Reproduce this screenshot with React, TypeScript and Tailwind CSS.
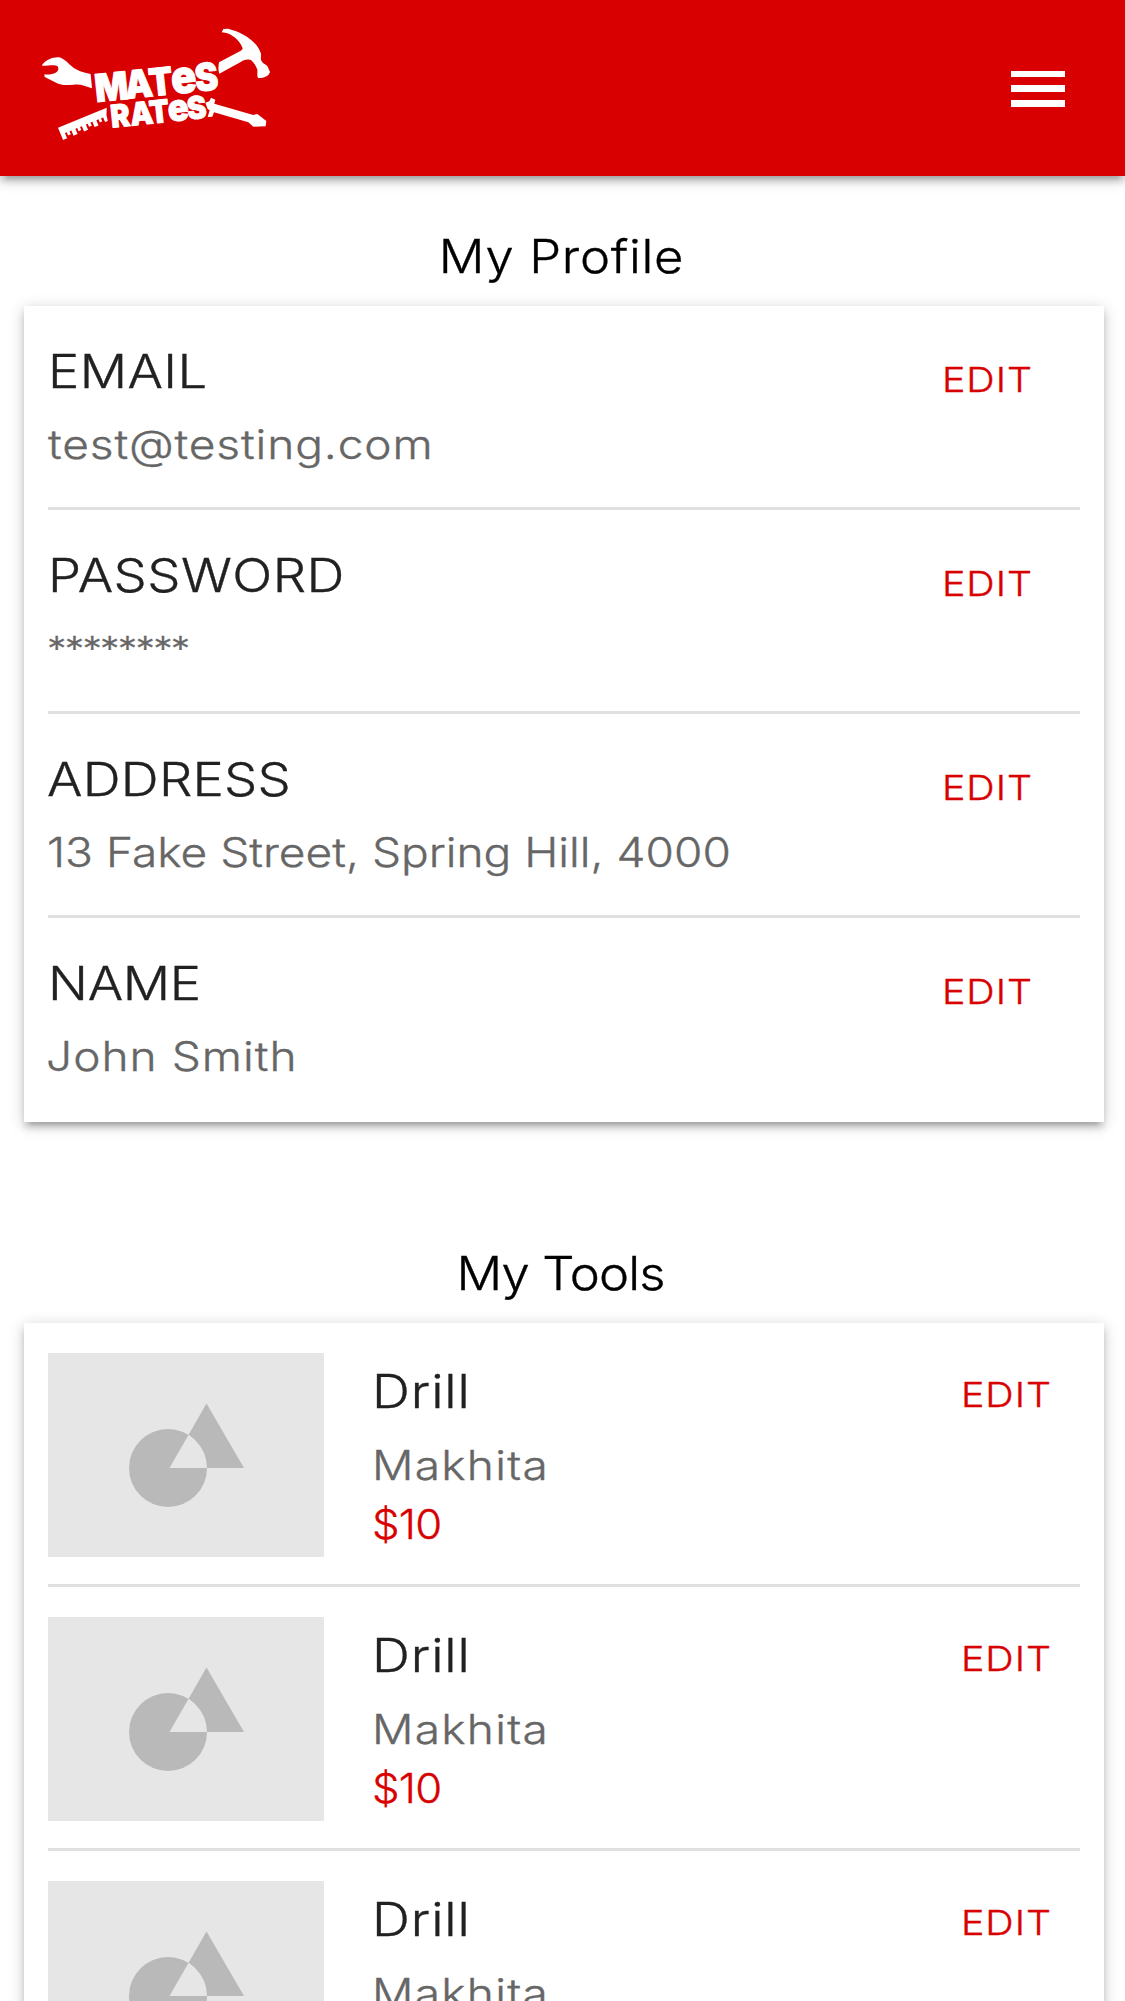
import React from 'react';

const profile = [
  { label: 'EMAIL', value: 'test@testing.com', labelClass: 'tracking-[0.3px]', valueClass: 'tracking-[0.76px] text-[40.4px]' },
  { label: 'PASSWORD', value: '********', labelClass: 'tracking-[0.4px]', valueClass: 'tracking-[-1.5px] text-[34px] -ml-px' },
  { label: 'ADDRESS', value: '13 Fake Street, Spring Hill, 4000', labelClass: 'tracking-[0.2px] -ml-px', valueClass: 'tracking-[0px] text-[40.4px] -ml-px' },
  { label: 'NAME', value: 'John Smith', labelClass: 'tracking-[-0.3px]', valueClass: 'tracking-[0.9px] text-[40.4px] -ml-0.5' },
];

const tools = [
  { id: 1, name: 'Drill', brand: 'Makhita', price: '$10' },
  { id: 2, name: 'Drill', brand: 'Makhita', price: '$10' },
  { id: 3, name: 'Drill', brand: 'Makhita', price: '$10' },
];

function Logo() {
  return (
    <svg viewBox="0 0 780 420" className="h-[140px] w-[260px]" fill="#fff" role="img" aria-label="Mates Rates">
      <path d="M36 150C50 132 75 124 92 128C108 134 120 152 138 163C152 171 168 175 182 177L186 220C165 212 150 206 130 209C110 210 95 212 80 204L44 186L43 178C58 180 68 177 76 174C85 169 88 160 82 153C72 148 50 153 37 152Z" />
      <path d="M580 42L594 41C640 52 682 80 693 116C694 124 691 130 694 137C700 147 708 147 712 153L720 171C716 184 700 190 684 189C680 180 683 172 682 164C678 152 668 136 660 134C650 132 640 134 632 141L568 176C564 165 565 155 567 142L631 108C640 104 638 98 636 95C628 75 605 58 590 54L575 52Z" />
      <path
        transform="matrix(.925 -.38 .38 .925 84 338)"
        d="M0 0H158L149 20L146 38H137V23H130V33H122V23H115V40H102V23H96V33H87V23H81V40H68V23H62V33H53V23H47V40H34V23H28V33H19V23H13V40H0Z"
      />
      <path d="M526 263L538 259L543 248L556 254L553 266L670 300L682 297L709 318L707 334L670 335L655 322L552 292L547 305L533 306L539 286L533 282Z" />
      <g fontFamily="Inter, sans-serif" fontWeight="900" stroke="#fff" strokeWidth="3" strokeLinejoin="round">
        <g transform="translate(204 261) rotate(-6) scale(.91 1)">
          <text fontSize="115">
            <tspan x="-6">M</tspan><tspan x="94">A</tspan><tspan x="173">T</tspan><tspan x="247" fontSize="138">e</tspan><tspan x="326">S</tspan>
          </text>
        </g>
        <g transform="translate(249 338) rotate(-6) scale(.92 1)">
          <text fontSize="94">
            <tspan x="-4">R</tspan><tspan x="60">A</tspan><tspan x="123">T</tspan><tspan x="184" fontSize="112">e</tspan><tspan x="247">S</tspan>
          </text>
        </g>
      </g>
    </svg>
  );
}

function Placeholder() {
  return (
    <svg viewBox="0 0 276 204" className="mt-[30px] h-[204px] w-[276px] shrink-0 bg-[#e6e6e6]" fill="#b9b9b9">
      <path fillRule="evenodd" d="M81 115a39 39 0 1 0 78 0a39 39 0 1 0 -78 0ZM158.500 50.500L196 115H121.500Z" />
    </svg>
  );
}

function Edit({ className }: { className: string }) {
  return (
    <div className={className}>
      <button className="block origin-left scale-x-[1.14] text-[34.6px] leading-[48px] tracking-[0.8px] text-[#d80000]">EDIT</button>
    </div>
  );
}

const cardShadow = 'shadow-[0_6px_6px_0_rgba(0,0,0,0.14),0_9px_3px_-6px_rgba(0,0,0,0.12),0_3px_15px_0_rgba(0,0,0,0.2)]';

export default function App() {
  return (
    <div className="h-[2001px] overflow-hidden bg-white font-['Inter',sans-serif] font-light whitespace-nowrap [-webkit-text-stroke:0.35px]">
      <header className={`flex h-44 items-start justify-between bg-[#d80000] pt-[15px] pr-[60px] pl-[30px] ${cardShadow}`}>
        <Logo />
        <button aria-label="Menu" className="mt-[55.500px] flex w-[54px] flex-col gap-[8.600px]">
          <span className="h-[6.400px] bg-white" />
          <span className="h-[6.400px] bg-white" />
          <span className="h-[6.400px] bg-white" />
        </button>
      </header>

      <h1 className="mt-14 flex justify-center pr-[3px] text-[46.200px] leading-[48px]">
        <span className="scale-x-[1.1] tracking-[0.6px]">My Profile</span>
      </h1>
      <section className={`mt-[26px] mr-[21px] ml-6 bg-white px-6 ${cardShadow}`}>
        {profile.map((row) => (
          <div key={row.label} className="flex h-[204px] border-b-[3px] border-[#e0e0e0] last:border-b-0">
            <div className="flex grow flex-col items-start pt-[41px]">
              <h2 className={`origin-left scale-x-[1.14] text-[46.200px] leading-[48px] text-[#212121] ${row.labelClass}`}>{row.label}</h2>
              <p className={`mt-[26px] origin-left scale-x-[1.14] leading-[48px] text-[#666] ${row.valueClass}`}>{row.value}</p>
            </div>
            <Edit className="w-[138px] shrink-0 pt-[49px]" />
          </div>
        ))}
      </section>

      <h1 className="mt-[127px] flex justify-center pr-[3px] text-[46.200px] leading-[48px]">
        <span className="scale-x-[1.1] tracking-[-0.8px]">My Tools</span>
      </h1>
      <section className={`mt-[26px] mr-[21px] ml-6 bg-white px-6 ${cardShadow}`}>
        {tools.map((tool) => (
          <div key={tool.id} className="flex h-[264px] border-b-[3px] border-[#e0e0e0]">
            <Placeholder />
            <div className="flex grow flex-col items-start pt-[44px] pl-12">
              <h2 className="origin-left scale-x-[1.14] text-[46.200px] leading-[48px] tracking-[0.8px] text-[#212121]">{tool.name}</h2>
              <p className="mt-[27px] origin-left scale-x-[1.14] text-[40.400px] leading-[48px] tracking-[1.1px] text-[#666]">{tool.brand}</p>
              <p className="mt-[11px] origin-left scale-x-[1.08] text-[40.400px] leading-[48px] tracking-[-0.7px] text-[#d80000]">{tool.price}</p>
            </div>
            <Edit className="w-[119px] shrink-0 pt-[47px]" />
          </div>
        ))}
      </section>
    </div>
  );
}
